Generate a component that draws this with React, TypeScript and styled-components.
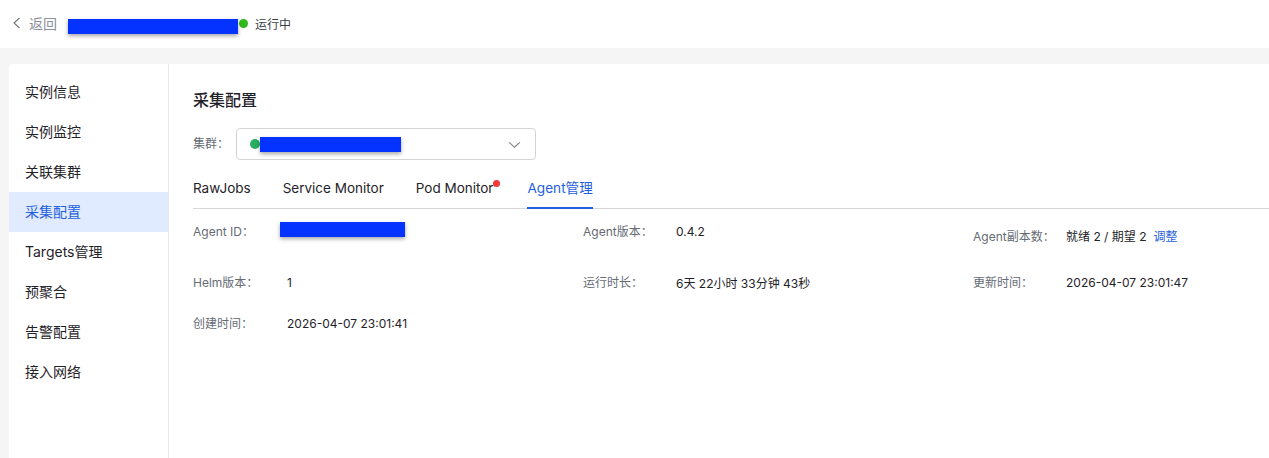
import React from "react";
import styled, { createGlobalStyle } from "styled-components";

const Global = createGlobalStyle`
  html, body { margin: 0; padding: 0; height: 100%; background: #f5f5f5; overflow: hidden; }
  body { font-family: Inter, "Noto Sans CJK SC", "Noto Sans", sans-serif; color: #1f2329; -webkit-font-smoothing: antialiased; }
  * { box-sizing: border-box; }
`;

const Page = styled.div`
  width: 1269px;
  height: 458px;
  display: flex;
  flex-direction: column;
  overflow: hidden;
`;

const Header = styled.header`
  height: 48px;
  background: #fff;
  display: flex;
  align-items: center;
  padding-left: 11px;
  flex-shrink: 0;
`;

const Back = styled.span`
  display: flex;
  align-items: center;
  gap: 6px;
  font-size: 14px;
  color: #8a8f99;
  width: 57px;
  flex-shrink: 0;
  padding-bottom: 3px;
`;

const TitleWrap = styled.div`
  position: relative;
  width: 170px;
  height: 16px;
  flex-shrink: 0;
`;

const Redaction = styled.div<{ $w: number; $h: number; $x: number; $y: number }>`
  position: absolute;
  left: ${(p) => p.$x}px;
  top: ${(p) => p.$y}px;
  width: ${(p) => p.$w}px;
  height: ${(p) => p.$h}px;
  background: #0433ff;
  box-shadow: 0 2px 4px rgba(0, 0, 0, 0.35);
`;

const StatusDot = styled.span`
  width: 9px;
  height: 9px;
  border-radius: 50%;
  background: #2fb91c;
  margin: 0 0 1px 1px;
  flex-shrink: 0;
`;

const StatusText = styled.span`
  font-size: 12px;
  color: #3a3f47;
  margin-left: 7px;
  padding-bottom: 2px;
`;

const Body = styled.div`
  flex: 1;
  padding: 16px 0 0 9px;
  display: flex;
  min-height: 0;
`;

const Card = styled.div`
  flex: 1;
  background: #fff;
  border-radius: 4px 0 0 0;
  display: flex;
`;

const Side = styled.nav`
  width: 160px;
  flex-shrink: 0;
  border-right: 1px solid #e8e8e8;
  padding-top: 8px;
`;

const SideItem = styled.div<{ $active?: boolean }>`
  height: 40px;
  display: flex;
  align-items: center;
  padding: 0 0 2px 16px;
  font-size: 14px;
  color: ${(p) => (p.$active ? "#1f5fe0" : "#1f2329")};
  background: ${(p) => (p.$active ? "#e0ebff" : "transparent")};
`;

const Main = styled.main`
  flex: 1;
  min-width: 0;
  padding-top: 26px;
  padding-left: 24px;
`;

const Heading = styled.h2`
  margin: 0;
  font-size: 16px;
  line-height: 20px;
  font-weight: 500;
  color: #1f2329;
`;

const ClusterRow = styled.div`
  display: flex;
  align-items: center;
  margin-top: 18px;
`;

const ClusterLabel = styled.span`
  font-size: 12px;
  color: #666b74;
  width: 43px;
  padding-bottom: 3px;
`;

const Select = styled.div`
  position: relative;
  width: 300px;
  height: 32px;
  border: 1px solid #d4d4d4;
  border-radius: 4px;
  display: flex;
  align-items: center;
  justify-content: space-between;
  padding: 0 14px 0 13px;
`;

const ClusterDot = styled.span`
  width: 10px;
  height: 10px;
  border-radius: 50%;
  background: #27ae60;
`;

const Tabs = styled.div`
  display: flex;
  gap: 32px;
  height: 38px;
  margin-top: 11px;
  border-bottom: 1px solid #d6d6d6;
`;

const Tab = styled.div<{ $active?: boolean }>`
  position: relative;
  height: 38px;
  padding-top: 6px;
  font-size: ${(p) => (p.$active ? "13.6px" : "13.5px")};
  margin-left: ${(p) => (p.$active ? "2px" : "0")};
  line-height: 22px;
  color: ${(p) => (p.$active ? "#1f5fe0" : "#1f2329")};
  border-bottom: 2px solid ${(p) => (p.$active ? "#1f5fe0" : "transparent")};
`;

const Badge = styled.span`
  position: absolute;
  right: -7px;
  top: 9px;
  width: 7px;
  height: 7px;
  border-radius: 50%;
  background: #f03a3a;
`;

const Info = styled.div`
  display: grid;
  grid-template-columns: 390px 390px 1fr;
  grid-template-rows: 51px 41px auto;
  margin-top: 12px;
`;

const Cell = styled.div<{ $tall?: boolean }>`
  display: flex;
  align-items: center;
  height: ${(p) => (p.$tall ? "29px" : "20px")};
  font-size: 12px;
`;

const Label = styled.span<{ $wide?: boolean }>`
  width: ${(p) => (p.$wide ? "94px" : "93px")};
  flex-shrink: 0;
  color: #666b74;
  padding-bottom: 1px;
`;

const Value = styled.span`
  position: relative;
  color: #1f2329;
`;

const LinkText = styled.span`
  color: #1f5fe0;
  margin-left: 7px;
`;

const Chevron = styled.svg`
  width: 13px;
  height: 13px;
  fill: none;
  stroke: currentColor;
  stroke-width: 1.1;
`;

export default function App() {
  const menu = ["实例信息", "实例监控", "关联集群", "采集配置", "Targets管理", "预聚合", "告警配置", "接入网络"];
  return (
    <Page>
      <Global />
      <Header>
        <Back>
          <Chevron viewBox="0 0 12 12" style={{ width: 12, height: 14, color: "#70757d" }}>
            <path d="M8.5 1 3 6 8.5 11" />
          </Chevron>
          返回
        </Back>
        <TitleWrap>
          <Redaction $x={0} $y={3} $w={170} $h={15} />
        </TitleWrap>
        <StatusDot />
        <StatusText>运行中</StatusText>
      </Header>
      <Body>
        <Card>
          <Side>
            {menu.map((m) => (
              <SideItem key={m} $active={m === "采集配置"}>{m}</SideItem>
            ))}
          </Side>
          <Main>
            <Heading>采集配置</Heading>
            <ClusterRow>
              <ClusterLabel>集群：</ClusterLabel>
              <Select>
                <ClusterDot />
                <Redaction $x={23} $y={8} $w={141} $h={15} />
                <Chevron viewBox="0 0 12 12" style={{ color: "#85898f" }}>
                  <path d="M1 4 6 8.5 11 4" />
                </Chevron>
              </Select>
            </ClusterRow>
            <Tabs>
              <Tab>RawJobs</Tab>
              <Tab>Service Monitor</Tab>
              <Tab>Pod Monitor<Badge /></Tab>
              <Tab $active>Agent管理</Tab>
            </Tabs>
            <Info>
              <Cell>
                <Label $wide>Agent ID：</Label>
                <Value><Redaction $x={-7} $y={-9} $w={125} $h={15} /></Value>
              </Cell>
              <Cell>
                <Label>Agent版本：</Label>
                <Value>0.4.2</Value>
              </Cell>
              <Cell $tall>
                <Label>Agent副本数：</Label>
                <Value>就绪 2 / 期望 2</Value>
                <LinkText>调整</LinkText>
              </Cell>
              <Cell>
                <Label $wide>Helm版本：</Label>
                <Value>1</Value>
              </Cell>
              <Cell>
                <Label>运行时长：</Label>
                <Value>6天 22小时 33分钟 43秒</Value>
              </Cell>
              <Cell>
                <Label>更新时间：</Label>
                <Value>2026-04-07 23:01:47</Value>
              </Cell>
              <Cell>
                <Label $wide>创建时间：</Label>
                <Value>2026-04-07 23:01:41</Value>
              </Cell>
            </Info>
          </Main>
        </Card>
      </Body>
    </Page>
  );
}
